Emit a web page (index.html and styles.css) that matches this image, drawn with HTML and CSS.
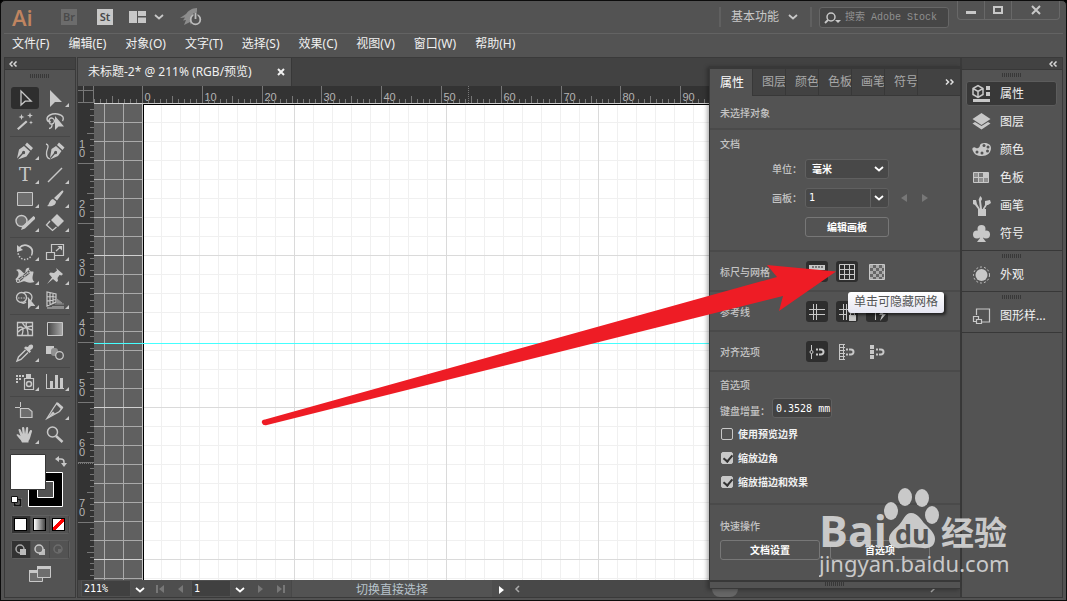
FILE: index.html
```html
<!DOCTYPE html>
<html lang="zh-CN">
  <head>
    <meta charset="utf-8">
    <meta name="viewport" content="width=device-width">
    <title>未标题-2*</title>
    <link rel="stylesheet" href="styles.css">
  </head>
  <body>
    <!-- icons -->
    <svg class="defs" width="0" height="0">
      <symbol id="chevron" viewBox="0 0 10 6"><path d="M1 1l4 3.5L9 1" fill="none" stroke="currentColor" stroke-width="1.8"/></symbol>
      <symbol id="collapse" viewBox="0 0 9 6"><path d="M3.5.5L1 3l2.500 2.500M7.500.5L5 3l2.500 2.500" fill="none" stroke="currentColor" stroke-width="1.500"/></symbol>
      <symbol id="select" viewBox="0 0 20 20"><path d="M6 3v14l4.200-3.800h6z" fill="none" stroke="currentColor" stroke-width="1.300"/></symbol>
      <symbol id="direct" viewBox="0 0 20 20"><path d="M5 2v17l5-5h7z"/></symbol>
      <symbol id="wand" viewBox="0 0 20 20"><path d="M2 16.500l9-8 1.500 1.500-9 8zM6.500 2l.8 2.200 2.200.8-2.200.8L6.500 8l-.8-2.200L3.500 5l2.200-.8zM15 .5l.8 2.200 2.200.8-2.200.8-.8 2.200-.8-2.200L12 3.500l2.200-.8zM16 8.500l.6 1.400 1.400.6-1.400.6-.6 1.400-.6-1.400-1.400-.6 1.400-.6z"/></symbol>
      <symbol id="lasso" viewBox="0 0 20 20"><path d="M5 10C1 9 1 5 5 3c4-2 11-1.500 13 2 .6 1.500.3 3-.5 4M5 10c-2.500-2 .5-5 3-3.500s1.500 5-1 5.500S4 10.500 5.500 9M7 12c.3 3-1 4.500-3 4.500" fill="none" stroke="currentColor" stroke-width="1.400"/><path d="M10 4v14l3.500-3.500H19z"/></symbol>
      <symbol id="pen" viewBox="0 0 20 20"><path d="M12 1.500l6 5.500-2 2.500L10 4zM9 5l6 5.500-3.500 5L3 18.500l5-5.500a1.600 1.600 0 1 0-1-1l-5 5.500L4 8.500z"/></symbol>
      <symbol id="curvature" viewBox="0 0 20 20"><path d="M14 1.500l5.500 5-2 2.500-5.500-5zM11 5l5.500 5-3.500 5L5 18.500l5-5.500a1.600 1.600 0 1 0-1-1l-4 5L6.500 8z"/><path d="M1 3c4 1 1 5 .6 8-.4 3 0 6 3.400 7" fill="none" stroke="currentColor" stroke-width="1.300"/></symbol>
      <symbol id="line" viewBox="0 0 20 20"><path d="M3 17L17 3" stroke="currentColor" stroke-width="1.500"/></symbol>
      <symbol id="rect" viewBox="0 0 20 20"><path d="M2.500 3.500h15v13h-15z" fill="#6e6e6e" stroke="currentColor"/></symbol>
      <symbol id="brush" viewBox="0 0 20 20"><path d="M16.500 2c1.500-1 2.500 0 1.500 1.500l-6 8L9 9zM8 10l3 2.500c0 4-4.500 5.500-9 4.500 2.500-1 2-6 6-7z"/></symbol>
      <symbol id="shaper" viewBox="0 0 20 20"><circle cx="6.500" cy="8" r="5.500" fill="#6e6e6e" stroke="currentColor" stroke-width="1.400"/><path d="M18.500 3L21 5 10 15.500 6 17l1.500-4z"/></symbol>
      <symbol id="eraser" viewBox="0 0 20 20"><path d="M12 1l7 7-6 6-7-7z"/><path d="M5 8L1.500 12l6 5.500 4-3.500" fill="none" stroke="currentColor" stroke-width="1.300"/></symbol>
      <symbol id="rotate" viewBox="0 0 20 20"><path d="M4 6c6-6 15-1 13 6" fill="none" stroke="currentColor" stroke-width="1.700"/><path d="M2 3v7l6-2z"/><path d="M17 12c-2 7-12 8-14-1" fill="none" stroke="currentColor" stroke-width="1.500" stroke-dasharray="1.500 1.500"/></symbol>
      <symbol id="scale" viewBox="0 0 20 20"><path d="M1.500 10.500h8v7h-8zM6.500 10V2.500h12v11H10M11 9l4.500-4" fill="none" stroke="currentColor" stroke-width="1.200"/><path d="M12.500 4H17v4.500z"/></symbol>
      <symbol id="width" viewBox="0 0 20 20"><path d="M1 4c3-2 5 0 6.500 2s3 1 3-1 2-4 4-3c-1 1-1 2 0 3s4 0 4 1-1 4-1 6 1 3 2 4c-3 1-6 1-8 0s-3-1-5 0-4 1-5 0l-1-3c2-2 3-3 3-5S3 5 1 4z"/><path d="M3 15L14 6" stroke="#535353" stroke-width="3"/><path d="M3 15L14 6" stroke="currentColor"/><g fill="#535353" stroke="currentColor"><circle cx="3" cy="15" r="1.500"/><circle cx="8.500" cy="10.500" r="1.500"/><circle cx="13.500" cy="5.500" r="1.500"/></g></symbol>
      <symbol id="pin" viewBox="0 0 20 20"><path d="M11 2l7 6-1.500 1.500-2-.5-2 3 .5 3L11.500 16 8 13l-6 5 5-6.500L4 8l1.500-1.500 3.500.5 3-2.500z"/></symbol>
      <symbol id="builder" viewBox="0 0 20 20"><circle cx="6.500" cy="7.500" r="5" fill="none" stroke="currentColor" stroke-width="1.300"/><path d="M8 3c3-2 9-.5 9 4.500 0 2-1 3-2 4M6 12c2 2 4 1 5 0" fill="none" stroke="currentColor" stroke-width="1.300"/><path d="M3 8h10" stroke="currentColor" stroke-dasharray="1.500 1.200"/><path d="M13 7v12l3-3h4.500z"/></symbol>
      <symbol id="perspective" viewBox="0 0 20 20"><path d="M2 2v14l9-4V4zM5 2.500v12.500M8 3.300v10.200M2 6.500l9 .5M2 11l9-1.500" fill="none" stroke="currentColor" stroke-width="1.200"/><path d="M12 9l5 4h-5zM10 14h9M7 16.500h12" fill="#909090" stroke="#909090"/><path d="M2 18h17" stroke="currentColor"/></symbol>
      <symbol id="mesh" viewBox="0 0 20 20"><path d="M2.500 3.500h15v13h-15zM3 9c5-3 6 1 4 7M7 3c2 5 6 7 10 8M3 13c3-3 8-5 14-6M12 3c-3 4 2 8 1 13" fill="none" stroke="currentColor" stroke-width="1.300"/></symbol>
      <symbol id="gradient" viewBox="0 0 20 20"><path d="M2.500 3.500h15v13h-15z" fill="url(#ramp)" stroke="currentColor"/></symbol>
      <symbol id="eyedropper" viewBox="0 0 20 20"><path d="M13 4c2-4 6-2.500 5 .5-.5 1.500-2 2-3 3l1 1L14.500 10 9 5l1.500-1.500z"/><path d="M10.500 7L3.500 14 2 18l4-1.500 7-7" fill="none" stroke="currentColor" stroke-width="1.400"/></symbol>
      <symbol id="blend" viewBox="0 0 20 20"><path d="M1 3h8v8H1z"/><rect x="6" y="5" width="7" height="8" rx="3" fill="#909090"/><circle cx="14.500" cy="12.500" r="3.800" fill="#535353" stroke="currentColor" stroke-width="1.300"/></symbol>
      <symbol id="spray" viewBox="0 0 20 20"><path d="M9.500 6.500h9v11h-9z" fill="none" stroke="currentColor" stroke-width="1.200"/><path d="M11 2h5v4h-5zM1 3h2v2H1zM4 3h2v2H4zM7 3h2v2H7zM1 6h2v2H1zM4 6h2v2H4zM1 9h2v2H1z"/><circle cx="14" cy="12" r="2.500" fill="none" stroke="currentColor" stroke-width="1.500"/></symbol>
      <symbol id="graph" viewBox="0 0 20 20"><path d="M1 2h1v14h17v1H1zM5 9h3v7H5zM10 3h3v13h-3zM15 6h3v10h-3z"/></symbol>
      <symbol id="artboard" viewBox="0 0 20 20"><path d="M5.500 1v5M0 6.500h5" stroke="currentColor"/><path d="M5.500 7.500h8l3.500 3v6H5.500z" fill="#6e6e6e" stroke="currentColor" stroke-width="1.200"/></symbol>
      <symbol id="slice" viewBox="0 0 20 20"><path d="M12 2l5.500 4.500-3 4L2 17.500 8.500 7z" fill="none" stroke="currentColor" stroke-width="1.300"/><path d="M11 3l2-1.500L18 6l-1.500 2.500zM2 17.500l8-5-2-2z"/></symbol>
      <symbol id="hand" viewBox="0 0 20 20"><path d="M7 17.500c-1-3-4.500-5.500-5.500-7.500 0-1.500 2-1 4 1L3.500 5c0-1.500 1.700-1.500 2.300 0L7.500 9 7 3c0-1.500 2.300-1.500 2.300 0l.7 6 1-6c.4-1.500 2.300-1 2.200.4L12.800 9.500l2.200-4c.9-1 2.400-.2 2 1-1.200 3-1.500 7-3.500 9.500v1.500z"/></symbol>
      <symbol id="zoom" viewBox="0 0 20 20"><circle cx="7.500" cy="7" r="5" fill="none" stroke="currentColor" stroke-width="1.500"/><path d="M11 11l6.500 6" stroke="currentColor" stroke-width="2.500"/></symbol>
      <symbol id="magnet" viewBox="0 0 9 8"><path d="M3 1.500h2a2.500 2.500 0 0 1 0 5H3M0 1.500h2M0 6.500h2" fill="none" stroke="currentColor" stroke-width="2"/></symbol>
      <linearGradient id="ramp"><stop offset="0" stop-color="#444"/><stop offset="1" stop-color="#aaa"/></linearGradient>
    </svg>

    <div class="app">
      <header class="titlebar">
        <span class="logo">Ai</span>
        <button class="app-badge badge-off">Br</button>
        <button class="app-badge">St</button>
        <button class="arrange" aria-label="排列文档">
          <svg width="17" height="12"><path d="M0 0h8v12H0zM9 0h8v5H9zM9 6.500h8V12H9z"/></svg>
          <svg width="10" height="6"><use href="#chevron"/></svg>
        </button>
        <button class="rocket" aria-label="GPU 性能">
          <svg width="22" height="18" viewBox="0 0 22 18"><path d="M17 0C12 0 8 3 6 6L0 10l5-.5-2 3 3-.5-2 5 6-3 1 3c0-6 7-8 6-17z" fill="#8c8c8c"/><circle cx="15.500" cy="11.500" r="4.800" fill="#535353" stroke="#bbb" stroke-width="1.800"/><path d="M15.500 5v6" stroke="#535353" stroke-width="4"/><path d="M15.500 5v6" stroke="#bbb" stroke-width="1.800"/></svg>
        </button>
        <div class="titlebar-right">
          <button class="workspace-menu">基本功能 <svg width="10" height="6"><use href="#chevron"/></svg></button>
          <label class="search">
            <svg width="17" height="12" viewBox="0 0 17 12"><circle cx="7" cy="5" r="4" fill="none" stroke="currentColor" stroke-width="1.500"/><path d="M4 8l-3 3" stroke="currentColor" stroke-width="1.800"/><path d="M11 8h6l-3 3z"/></svg>
            <input type="text" placeholder="搜索 Adobe Stock" aria-label="搜索">
          </label>
          <div class="window-buttons">
            <button aria-label="最小化"><svg width="10" height="10"><path d="M0 6h10v3H0z"/></svg></button>
            <button aria-label="最大化"><svg width="10" height="10"><path d="M1 2h8v6H1z" fill="none" stroke="currentColor" stroke-width="2"/></svg></button>
            <button class="close" aria-label="关闭"><svg width="10" height="10"><path d="M1 1l8 8M9 1L1 9" stroke="currentColor" stroke-width="2"/></svg></button>
          </div>
        </div>
      </header>

      <nav class="menubar">
        <button>文件(F)</button>
        <button>编辑(E)</button>
        <button>对象(O)</button>
        <button>文字(T)</button>
        <button>选择(S)</button>
        <button>效果(C)</button>
        <button>视图(V)</button>
        <button>窗口(W)</button>
        <button>帮助(H)</button>
      </nav>

      <div class="workspace">
        <aside class="toolbox">
          <div class="dock-head"><svg width="9" height="6"><use href="#collapse"/></svg></div>
          <div class="grip"></div>
          <div class="tools">
            <button class="tool active" aria-label="选择"><svg><use href="#select"/></svg></button>
            <button class="tool more" aria-label="直接选择"><svg><use href="#direct"/></svg></button>
            <button class="tool" aria-label="魔棒"><svg><use href="#wand"/></svg></button>
            <button class="tool" aria-label="套索"><svg><use href="#lasso"/></svg></button>
          </div>
          <div class="tools">
            <button class="tool more" aria-label="钢笔"><svg><use href="#pen"/></svg></button>
            <button class="tool" aria-label="曲率"><svg><use href="#curvature"/></svg></button>
            <button class="tool more type-tool" aria-label="文字">T</button>
            <button class="tool more" aria-label="直线段"><svg><use href="#line"/></svg></button>
            <button class="tool more" aria-label="矩形"><svg><use href="#rect"/></svg></button>
            <button class="tool more" aria-label="画笔"><svg><use href="#brush"/></svg></button>
            <button class="tool more" aria-label="Shaper"><svg><use href="#shaper"/></svg></button>
            <button class="tool more" aria-label="橡皮擦"><svg><use href="#eraser"/></svg></button>
          </div>
          <div class="tools">
            <button class="tool more" aria-label="旋转"><svg><use href="#rotate"/></svg></button>
            <button class="tool more" aria-label="比例缩放"><svg><use href="#scale"/></svg></button>
            <button class="tool more" aria-label="宽度"><svg><use href="#width"/></svg></button>
            <button class="tool more" aria-label="操控变形"><svg><use href="#pin"/></svg></button>
            <button class="tool more" aria-label="形状生成器"><svg><use href="#builder"/></svg></button>
            <button class="tool more" aria-label="透视网格"><svg><use href="#perspective"/></svg></button>
          </div>
          <div class="tools">
            <button class="tool" aria-label="网格"><svg><use href="#mesh"/></svg></button>
            <button class="tool" aria-label="渐变"><svg><use href="#gradient"/></svg></button>
            <button class="tool more" aria-label="吸管"><svg><use href="#eyedropper"/></svg></button>
            <button class="tool" aria-label="混合"><svg><use href="#blend"/></svg></button>
          </div>
          <div class="tools">
            <button class="tool more" aria-label="符号喷枪"><svg><use href="#spray"/></svg></button>
            <button class="tool more" aria-label="柱形图"><svg><use href="#graph"/></svg></button>
          </div>
          <div class="tools">
            <button class="tool" aria-label="画板"><svg><use href="#artboard"/></svg></button>
            <button class="tool more" aria-label="切片"><svg><use href="#slice"/></svg></button>
            <button class="tool more" aria-label="抓手"><svg><use href="#hand"/></svg></button>
            <button class="tool" aria-label="缩放"><svg><use href="#zoom"/></svg></button>
          </div>
          <svg class="swatches" width="60" height="56">
            <path d="M18.500 18.500h34v34h-34z" fill="#000" stroke="#fff"/>
            <path d="M27.500 27.500h16v16h-16z" fill="#535353" stroke="#fff"/>
            <path d="M.5.5h35v35H.5z" fill="#fff" stroke="#383838"/>
            <path d="M48 5h3q3 0 3 3v3" fill="none" stroke="#c8c8c8" stroke-width="1.500"/>
            <path d="M45 5l4-3v6zM51 9h6l-3 4z" fill="#c8c8c8"/>
            <path d="M4.500 45.500h6v6h-6z" fill="none" stroke="#999" stroke-width="3"/>
            <path d="M4.500 45.500h6v6h-6z" fill="none" stroke="#111" stroke-width="2"/>
            <path d="M1.500 42.500h6v6h-6z" fill="#fff" stroke="#111"/>
          </svg>
          <div class="switches">
            <button class="on" aria-label="颜色"><span class="chip"></span></button>
            <button aria-label="渐变"><span class="chip chip-ramp"></span></button>
            <button aria-label="无"><span class="chip chip-none"></span></button>
          </div>
          <div class="switches">
            <button class="on" aria-label="正常绘图"><svg width="12" height="12"><circle cx="5" cy="5" r="4" fill="none" stroke="#aaa" stroke-width="1.500"/><path d="M5 5h6v6H5z" fill="#bbb"/></svg></button>
            <button aria-label="背面绘图"><svg width="12" height="12"><path d="M5 5h6v6H5z" fill="#bbb"/><circle cx="5" cy="5" r="4" fill="#666" stroke="#c8c8c8" stroke-width="1.500"/></svg></button>
            <button aria-label="内部绘图"><svg width="12" height="12"><circle cx="5" cy="5" r="4" fill="none" stroke="#6c6c6c" stroke-width="1.500"/><path d="M5 5h3v3H5z" fill="#6c6c6c"/></svg></button>
          </div>
          <button class="screen-mode" aria-label="更改屏幕模式"><svg width="22" height="16"><g fill="#6e6e6e" stroke="#c8c8c8"><path d="M.5 4.500h13v11H.5z"/><path d="M8.500.5h13v11h-13z"/></g><path d="M8 0h14v3H8zM0 4h8v3H0z" fill="#c8c8c8"/></svg></button>
        </aside>

        <main class="document">
          <div class="doc-tabs">
            <div class="doc-tab">未标题-2* @ 211% (RGB/预览)<button aria-label="关闭文档"><svg width="8" height="8"><path d="M1 1l6 6M7 1L1 7" stroke="currentColor" stroke-width="2"/></svg></button></div>
          </div>
          <div class="stage">
            <div class="corner"></div>
            <svg class="ruler" id="ruler-x"></svg>
            <svg class="ruler" id="ruler-y"></svg>
            <div class="canvas">
              <div class="artboard"></div>
              <div class="guide"></div>
            </div>
          </div>
          <footer class="status">
            <input class="zoom-value" type="text" value="211%" aria-label="缩放比例">
            <button class="drop" aria-label="缩放列表"><svg width="10" height="6"><use href="#chevron"/></svg></button>
            <button class="nav" aria-label="首项"><svg width="8" height="8"><path d="M0 0h2v8H0zM8 0v8L3 4z"/></svg></button>
            <button class="nav" aria-label="上一项"><svg width="8" height="8"><path d="M6 0v8L1 4z"/></svg></button>
            <input class="board-value" type="text" value="1" aria-label="画板导航">
            <button class="drop" aria-label="画板列表"><svg width="10" height="6"><use href="#chevron"/></svg></button>
            <button class="nav" aria-label="下一项"><svg width="8" height="8"><path d="M2 0v8l5-4z"/></svg></button>
            <button class="nav" aria-label="末项"><svg width="8" height="8"><path d="M6 0h2v8H6zM0 0v8l5-4z"/></svg></button>
            <span class="hint">切换直接选择</span>
            <button class="drop" aria-label="显示"><svg width="8" height="10"><path d="M2 1v8l5-4z"/></svg></button>
            <div class="scrollbar">
              <svg width="6" height="8"><path d="M5 1L2 4l3 3" fill="none" stroke="#aaa" stroke-width="1.500"/></svg>
              <span class="thumb"></span>
              <svg width="6" height="8"><path d="M1 1l3 3-3 3" fill="none" stroke="#aaa" stroke-width="1.500"/></svg>
            </div>
          </footer>

          <!-- floating properties panel -->
          <section class="panel">
            <div class="panel-tabs">
              <button class="current">属性</button>
              <button>图层</button>
              <button>颜色</button>
              <button>色板</button>
              <button>画笔</button>
              <button>符号</button>
              <button class="expand" aria-label="更多"><svg width="9" height="6" viewBox="0 0 9 6"><path d="M1 .5L3.500 3 1 5.500M5.500.5L8 3 5.500 5.500" fill="none" stroke="currentColor" stroke-width="1.500"/></svg></button>
            </div>
            <div class="group group-none"><h2>未选择对象</h2></div>
            <div class="group group-doc">
              <h2>文档</h2>
              <div class="field">
                <label for="unit">单位：</label>
                <span class="select-box">
                  <select id="unit"><option>毫米</option><option>像素</option></select>
                  <svg width="10" height="6"><use href="#chevron"/></svg>
                </span>
              </div>
              <div class="field">
                <label for="board">画板：</label>
                <span class="combo">
                  <input id="board" type="text" value="1">
                  <button aria-label="选择画板"><svg width="10" height="6"><use href="#chevron"/></svg></button>
                </span>
                <div class="steps">
                  <button aria-label="上一画板"><svg width="6" height="8"><path d="M6 0v8L0 4z"/></svg></button>
                  <button aria-label="下一画板"><svg width="6" height="8"><path d="M0 0v8l6-4z"/></svg></button>
                </div>
              </div>
              <div class="field"><button class="outline edit-board">编辑画板</button></div>
            </div>
            <div class="group row">
              <h2>标尺与网格</h2>
              <button class="toggle on" aria-label="显示标尺"><svg><path d="M0 1h16v5H6v10H0z"/><path d="M4 2v2M7 2v2M10 2v2M13 2v2" stroke="#2b2b2b"/></svg></button>
              <button class="toggle on" aria-label="隐藏网格"><svg><path d="M.5.5h15v15H.5zM5.500 0v16M10.500 0v16M0 5.500h16M0 10.500h16" fill="none" stroke="currentColor"/></svg></button>
              <button class="toggle" aria-label="透明度网格"><svg><path d="M.5.5h15v15H.5z" fill="#666" stroke="currentColor"/><path d="M1 1h3v3H1zM7 1h3v3H7zM13 1h2v3h-2zM4 4h3v3H4zM10 4h3v3h-3zM1 7h3v3H1zM7 7h3v3H7zM13 7h2v3h-2zM4 10h3v3H4zM10 10h3v3h-3zM1 13h3v2H1zM7 13h3v2H7zM13 13h2v2h-2z" fill="#aaa"/></svg></button>
            </div>
            <div class="group row">
              <h2>参考线</h2>
              <button class="toggle on" aria-label="显示参考线"><svg><path d="M4.500 0v16M7.500 0v16M0 5.500h16M0 10.500h16" stroke="currentColor"/></svg></button>
              <button class="toggle on" aria-label="锁定参考线"><svg><path d="M4.500 0v16M7.500 0v16M0 5.500h16M0 10.500h8" stroke="currentColor"/><path d="M10 11h7v6h-7z"/><path d="M11.500 11V9h4v2" fill="none" stroke="currentColor"/></svg></button>
              <button class="toggle on" aria-label="智能参考线"><svg><path d="M6.500 0v16M0 5.500h16" stroke="currentColor"/><path d="M14 5l-4 6h3l-2 6 6-7h-3l2-5z"/></svg></button>
            </div>
            <div class="group row">
              <h2>对齐选项</h2>
              <button class="toggle on" aria-label="对齐点"><svg><path d="M2.500 1v14" stroke="currentColor"/><circle cx="2.500" cy="8" r="1.500" fill="#2b2b2b" stroke="currentColor"/><use href="#magnet" x="7" y="4" width="9" height="8"/></svg></button>
              <button class="toggle" aria-label="对齐网格"><svg><path d="M.5 0v16M4.500 0v16M0 .5h6M0 3.500h6M0 6.500h6M0 9.500h6M0 12.500h6M0 15.500h6" stroke="currentColor"/><use href="#magnet" x="7" y="4" width="9" height="8"/></svg></button>
              <button class="toggle" aria-label="对齐像素"><svg><path d="M1 1h4v4H1zM1 6h4v4H1zM1 11h4v4H1z"/><use href="#magnet" x="7" y="4" width="9" height="8"/></svg></button>
            </div>
            <div class="group group-prefs">
              <h2>首选项</h2>
              <div class="increment">
                <label for="increment">键盘增量：</label>
                <input id="increment" type="text" value="0.3528 mm">
              </div>
              <label class="check"><input type="checkbox">使用预览边界</label>
              <label class="check"><input type="checkbox" checked>缩放边角</label>
              <label class="check"><input type="checkbox" checked>缩放描边和效果</label>
            </div>
            <div class="group group-quick">
              <h2>快速操作</h2>
              <div class="quick">
                <button class="outline">文档设置</button>
                <button class="outline">首选项</button>
              </div>
            </div>
            <div class="panel-foot"><div class="grip"></div></div>
          </section>

          <svg class="arrow" width="576" height="164"><path d="M4 154.500L516 12l-10-12 69 6.500L518 46l4-15L6 160q-4 1-5-2t3-3.500z" fill="#ee1c25"/></svg>
          <div class="tooltip" role="tooltip">单击可隐藏网格</div>
        </main>

        <aside class="dock">
          <div class="dock-head"><svg width="9" height="6"><use href="#collapse"/></svg></div>
          <div class="dock-group">
            <div class="grip"></div>
            <button class="dock-item active"><svg><path d="M1 4.500l5-3 5 3v6l-5 3-5-3zM1 4.500l5 3 5-3M6 7.500v6" fill="none" stroke="currentColor" stroke-width="1.500"/><path d="M14 2h4v4h-4zM14 8h4v4h-4zM1 15h17v3H1z"/></svg>属性</button>
            <button class="dock-item"><svg><path d="M9.500 1l9 6-9 6-9-6zM.5 11.500L3 10l6.500 4 6.500-4 2.500 1.500-9 6z"/></svg>图层</button>
            <button class="dock-item"><svg><path d="M1 11c-2-3 1-5 3-3 2 1 4-1 4-3 1-3 11-3 11 3 0 5-4 8-9 8-5 0-8-2-9-5z"/><g fill="#535353"><circle cx="12" cy="5.500" r="1.500"/><circle cx="16" cy="7" r="1.500"/><circle cx="15.500" cy="11" r="1.500"/><circle cx="5" cy="12" r="1.500"/><circle cx="10" cy="13" r="1.500"/></g></svg>颜色</button>
            <button class="dock-item"><svg><path d="M1.500 4.500h15v10h-15z" fill="#909090"/><path d="M7 5h4v4H7zM2 10h4v4H2z" fill="#777"/><path d="M12 5h4v4h-4z" /><path d="M6.500 4v11M11.500 4v11M1 9.500h16M1.500 4.500h15v10h-15z" fill="none" stroke="currentColor"/></svg>色板</button>
            <button class="dock-item"><svg><path d="M6 13h8v7H6zM8 0c3 2 2 4 1 5l1 8H8L7 5C6 3 8 2 8 0zM1 4h3l1 4 3 5H6L3 9 1 8zM13 5l5-1 1 3-3 2-1 0-3 5h-2l3-5z"/></svg>画笔</button>
            <button class="dock-item"><svg><circle cx="9.500" cy="5" r="4"/><circle cx="5" cy="10.500" r="4"/><circle cx="14" cy="10.500" r="4"/><path d="M8 6h3v8l3 4H5l3-4z"/></svg>符号</button>
          </div>
          <div class="dock-group">
            <div class="grip"></div>
            <button class="dock-item"><svg><circle cx="9.500" cy="10" r="6"/><circle cx="9.500" cy="10" r="8" fill="none" stroke="currentColor" stroke-dasharray="2 2"/></svg>外观</button>
          </div>
          <div class="dock-group">
            <div class="grip"></div>
            <button class="dock-item"><svg><g fill="none" stroke="currentColor" stroke-width="1.200"><path d="M4.500 9V3h13v13H10"/><path d="M1.500 10.500h5v5h-5z"/><path d="M4.500 13.500h5v4h-5z" fill="#535353"/></g></svg>图形样...</button>
          </div>
        </aside>
      </div>

      <svg class="watermark" width="192" height="92">
        <g fill="#d0d0d0">
          <text x="0" y="59" class="wm-bai">Bai</text>
          <ellipse cx="72" cy="23" rx="7" ry="9"/>
          <ellipse cx="86" cy="9" rx="7" ry="9"/>
          <ellipse cx="103" cy="10" rx="7" ry="9"/>
          <ellipse cx="113" cy="27" rx="7" ry="9"/>
          <path d="M92 25c7 0 10 7 14 11s10 9 10 15c0 8-7 10-12 9-8-1-16-1-22 0-7 1-12-3-12-9s6-10 10-14 6-12 12-12z"/>
          <text x="122" y="57" class="wm-cn">经验</text>
          <text x="0" y="84" class="wm-url">jingyan.baidu.com</text>
        </g>
        <text x="76" y="56" class="wm-du">du</text>
      </svg>
    </div>
    <script src="ruler.js"></script>
  </body>
</html>
```

FILE: styles.css
```css
* {
  margin: 0;
  padding: 0;
  box-sizing: border-box;
  outline: none;
}
body {
  background-color: #000;
  color: #e6e6e6;
  font-family: "Noto Sans", "Noto Sans CJK SC", sans-serif;
  font-size: 12px;
  line-height: 16px;
}
button, input, select {
  font: inherit;
  color: inherit;
  background: none;
  border: none;
  min-width: 0;
}
button {
  display: flex;
  align-items: center;
  justify-content: center;
  flex-shrink: 0;
  white-space: nowrap;
}
svg {
  display: block;
  flex-shrink: 0;
  fill: currentColor;
}
.defs {
  position: absolute;
}
.app {
  height: 100vh;
  border: 1px solid #0c0c0c;
  border-radius: 5px 5px 0 0;
  background-color: #535353;
  display: flex;
  flex-direction: column;
  position: relative;
  overflow: hidden;
}

/* title bar */
.titlebar {
  height: 33px;
  flex-shrink: 0;
  margin: 0 3px;
  padding-left: 8px;
  border-bottom: 1px solid #636363;
  display: flex;
  align-items: center;
  color: #c8c8c8;
}
.logo {
  width: 49px;
  color: #c08560;
  font-family: "Open Sans", sans-serif;
  font-size: 22px;
  font-weight: 600;
  line-height: 30px;
}
.app-badge {
  width: 16px;
  height: 16px;
  margin-right: 20px;
  background-color: #c8c8c8;
  color: #484848;
  font-size: 11px;
  font-weight: 600;
}
.app-badge.badge-off {
  background-color: #6c6c6c;
  color: #4a4a4a;
}
.arrange {
  gap: 8px;
  margin: 0 16px 0 -4px;
}
.titlebar-right {
  margin-left: auto;
  display: flex;
  align-self: stretch;
}
.workspace-menu {
  height: 20px;
  margin: 6px 7px 0 0;
  padding: 0 12px 0 10px;
  gap: 9px;
  border: solid #606060;
  border-width: 0 2px;
}
.search {
  width: 130px;
  height: 21px;
  margin: 6px 8px 0 0;
  padding: 0 4px;
  display: flex;
  align-items: center;
  gap: 4px;
  border: 1px solid #666;
  border-radius: 3px;
  background-color: #464646;
}
.search input {
  flex: 1;
  font-family: "Liberation Mono", "Noto Sans CJK SC", monospace;
  font-size: 10px;
}
.search input::placeholder {
  color: #909090;
}
.window-buttons {
  height: 19px;
  margin-right: 3px;
  display: flex;
  border: 1px solid #686868;
  border-top: none;
  border-radius: 0 0 4px 4px;
}
.window-buttons button {
  width: 27px;
  border-right: 1px solid #686868;
}
.window-buttons .close {
  width: 47px;
  border-right: none;
}

.menubar {
  height: 23px;
  flex-shrink: 0;
  padding: 0 11px 3px;
  display: flex;
  gap: 19px;
  color: #f0f0f0;
}

.workspace {
  flex: 1;
  min-height: 0;
  padding: 0 3px 2px;
  display: flex;
}
.dock-head {
  height: 12px;
  flex-shrink: 0;
  padding: 0 4px;
  display: flex;
  align-items: center;
  background-color: #424242;
  border-bottom: 1px solid #383838;
  color: #d8d8d8;
}
.grip {
  width: 20px;
  height: 4px;
  background: repeating-linear-gradient(90deg, #383838 0 1px, transparent 1px 2px);
}

/* tools on the left */
.toolbox {
  width: 72px;
  flex-shrink: 0;
  margin-right: 1px;
  border: 1px solid #3a3a3a;
  display: flex;
  flex-direction: column;
  align-items: center;
}
.toolbox .dock-head {
  align-self: stretch;
}
.toolbox > .grip {
  margin: 4px 0 6px;
}
.tools {
  width: 60px;
  padding: 2px 0;
  border-bottom: 1px solid #474747;
  display: flex;
  flex-wrap: wrap;
}
.tool {
  width: 28px;
  height: 22px;
  margin: 1px;
  border-radius: 3px;
  color: #c8c8c8;
  position: relative;
}
.tool svg {
  width: 20px;
  height: 20px;
  overflow: visible;
}
.tool.active {
  background-color: #2e2e2e;
}
.tool.more::after {
  content: "";
  position: absolute;
  right: 0;
  bottom: 2px;
  border: solid transparent;
  border-width: 0 0 4px 4px;
  border-bottom-color: #c8c8c8;
}
.type-tool {
  font-family: "DejaVu Serif", serif;
  font-size: 18px;
}
.swatches {
  margin: 4px 0 5px;
}
.switches {
  height: 19px;
  margin-bottom: 6px;
  display: flex;
  border: 1px solid #5f5f5f;
  border-radius: 3px;
}
.switches button {
  width: 19px;
  border-right: 1px solid #484848;
}
.switches .on {
  background-color: #323232;
}
.chip {
  width: 13px;
  height: 13px;
  border: 1px solid #000;
  background: #fff;
}
.chip-ramp {
  background: linear-gradient(90deg, #fff, #444);
}
.chip-none {
  background: linear-gradient(135deg, #fff 40%, #f00 40% 60%, #fff 60%);
}
.screen-mode {
  margin-top: 1px;
}

/* document window */
.document {
  flex: 1;
  min-width: 0;
  border: 1px solid #3a3a3a;
  background-color: #424242;
  display: flex;
  flex-direction: column;
  position: relative;
}
.doc-tabs {
  height: 28px;
  flex-shrink: 0;
  display: flex;
}
.doc-tab {
  padding: 0 6px 0 10px;
  display: flex;
  align-items: center;
  gap: 25px;
  background-color: #535353;
  border-right: 1px solid #383838;
  color: #f0f0f0;
}
.stage {
  flex: 1;
  min-height: 0;
  display: grid;
  grid-template: 17px 1fr / 16px 1fr;
  background-color: #333;
}
.corner {
  background:
    linear-gradient(#777, #777) 0 4px / 100% 1px no-repeat,
    linear-gradient(#777, #777) 5px 0 / 1px 100% no-repeat;
  border-right: 1px solid #777;
  border-bottom: 1px solid #777;
}
.ruler {
  width: 100%;
  height: 100%;
  overflow: hidden;
  color: #b4b4b4;
  font-family: "Liberation Sans", sans-serif;
  font-size: 11px;
}
.ruler line {
  stroke: #777;
}
.ruler .cursor {
  stroke-dasharray: 1 1;
}
.canvas {
  position: relative;
  overflow: hidden;
  background-color: #606060;
  background-image:
    linear-gradient(90deg, #c4c4c4 1px, transparent 1px),
    linear-gradient(#d0d0d0 1px, transparent 1px),
    linear-gradient(90deg, #aaa 1px, transparent 1px),
    linear-gradient(#aaa 1px, transparent 1px);
  background-size: 152px 152px, 152px 152px, 19px 19px, 19px 19px;
  background-position: 48px 0, 0 0, 10px 0, 0 0;
}
.artboard {
  position: absolute;
  inset: 1px 0 0 49px;
  border: solid #000;
  border-width: 1px 0 0 1px;
  background-color: #fff;
  background-image:
    linear-gradient(90deg, #dadada 1px, transparent 1px),
    linear-gradient(#dadada 1px, transparent 1px),
    linear-gradient(90deg, #f0f0f0 1px, transparent 1px),
    linear-gradient(#f0f0f0 1px, transparent 1px);
  background-size: 152px 152px, 152px 152px, 19px 19px, 19px 19px;
  background-position: 150px 0, 0 150px, 17px 0, 0 17px;
}
.guide {
  position: absolute;
  inset: 240px 0 auto 0;
  height: 1px;
  background-color: #4ff;
}
.status {
  height: 17px;
  flex-shrink: 0;
  padding-left: 3px;
  display: flex;
  background-color: #484848;
  color: #fff;
}
.status input {
  padding: 1px 0 0 2px;
  background-color: #404040;
  border: 1px solid #505050;
  font-family: "DejaVu Sans Mono", monospace;
  font-size: 10px;
}
.zoom-value {
  width: 50px;
}
.board-value {
  width: 40px;
}
.drop {
  width: 18px;
  padding-top: 2px;
  background-color: #4e4e4e;
}
.nav {
  width: 21px;
  color: #777;
  background-color: #4e4e4e;
}
.hint {
  width: 200px;
  margin-left: 1px;
  background-color: #535353;
  color: #b8c4cc;
  line-height: 19px;
  text-align: center;
}
.scrollbar {
  flex: 1;
  padding: 0 24px 0 4px;
  display: flex;
  align-items: center;
  justify-content: space-between;
}
.thumb {
  width: 26px;
  height: 17px;
  border-radius: 8px;
  background-color: #666;
}

/* properties panel */
.panel {
  position: absolute;
  top: 8px;
  right: -1px;
  width: 252px;
  border: 1px solid #383838;
  border-top-width: 3px;
  background-color: #535353;
  box-shadow: -2px 1px 4px rgba(0, 0, 0, 0.3);
  font-size: 10px;
}
.panel-tabs {
  height: 27px;
  display: flex;
  background-color: #424242;
  color: #a8a8a8;
  font-size: 12px;
}
.panel-tabs button {
  width: 33px;
  padding-left: 9px;
  justify-content: flex-start;
  overflow: hidden;
  border-right: 1px solid #383838;
  border-bottom: 1px solid #383838;
}
.panel-tabs .current {
  width: 43px;
  padding-left: 10px;
  border-bottom: none;
  background-color: #535353;
  color: #fff;
}
.panel-tabs .expand {
  flex: 1;
  justify-content: flex-end;
  padding-right: 6px;
  border-right: none;
  color: #e0e0e0;
}
.group {
  padding: 0 10px;
  border-bottom: 2px solid #4a4a4a;
}
.group h2, .field label, .increment label {
  font-size: 10px;
  font-weight: 500;
  color: #c4c4c4;
}
.group-none {
  padding-top: 9px;
  padding-bottom: 7px;
}
.group-doc {
  padding-top: 6px;
  padding-bottom: 13px;
  display: flex;
  flex-direction: column;
  gap: 9px;
}
.group-doc h2 {
  margin-bottom: -2px;
}
.field {
  height: 20px;
  display: flex;
  align-items: center;
}
.field label {
  width: 85px;
  padding-right: 3px;
  text-align: right;
}
.select-box, .combo, .edit-board {
  width: 84px;
}
.select-box, .combo {
  height: 20px;
  display: flex;
  align-items: center;
  border: 1px solid #606060;
  border-radius: 3px;
  background-color: #484848;
  color: #fff;
}
.select-box {
  padding-right: 4px;
}
.select-box select {
  flex: 1;
  padding-left: 6px;
  appearance: none;
  font-weight: 600;
}
.combo input {
  flex: 1;
  padding-left: 3px;
}
.combo input, .increment input {
  font-family: "DejaVu Sans Mono", monospace;
  font-size: 10px;
}
.combo button {
  width: 18px;
  align-self: stretch;
  padding-right: 1px;
  border-left: 1px solid #606060;
}
.steps {
  margin-left: 12px;
  display: flex;
  gap: 15px;
  color: #777;
}
.outline {
  height: 20px;
  border: 1px solid #777;
  border-radius: 3px;
  color: #fff;
  font-weight: 600;
}
.edit-board {
  margin-left: 85px;
}
.row {
  padding-top: 9px;
  padding-bottom: 8px;
  display: flex;
  align-items: center;
  gap: 8px;
}
.row h2 {
  width: 78px;
}
.toggle {
  width: 22px;
  height: 21px;
  border-radius: 3px;
  color: #c8c8c8;
}
.toggle.on {
  background-color: #2e2e2e;
}
.toggle svg {
  width: 16px;
  height: 16px;
  overflow: visible;
}
.group-prefs {
  padding-top: 5px;
  padding-bottom: 9px;
}
.increment {
  height: 20px;
  margin: 5px 0 4px;
  display: flex;
  align-items: center;
}
.increment label {
  width: 52px;
  padding-top: 6px;
}
.increment input {
  width: 60px;
  height: 20px;
  padding-left: 3px;
  border: 1px solid #606060;
  border-radius: 3px;
  background-color: #424242;
  color: #fff;
}
.check {
  height: 24px;
  display: flex;
  align-items: center;
  gap: 5px;
  color: #f0f0f0;
  font-weight: 600;
}
.check input {
  width: 12px;
  height: 12px;
  margin-left: 1px;
  appearance: none;
  border: 1px solid #c8c8c8;
  border-radius: 2px;
}
.check input:checked {
  background-color: #c8c8c8;
}
.check input:checked::after {
  content: "";
  display: block;
  width: 4px;
  height: 7px;
  margin-left: 3px;
  border: solid #333;
  border-width: 0 2px 2px 0;
  transform: rotate(40deg);
}
.group-quick {
  padding-top: 13px;
  padding-bottom: 20px;
  border-bottom-color: #383838;
}
.quick {
  margin-top: 6px;
  display: flex;
  gap: 10px;
}
.quick .outline {
  width: 100px;
}
.panel-foot {
  height: 6px;
  display: flex;
  justify-content: center;
}

.arrow {
  position: absolute;
  top: 207px;
  right: 123px;
  z-index: 1;
}
.tooltip {
  position: absolute;
  top: 234px;
  right: 16px;
  z-index: 2;
  height: 21px;
  padding: 2px 6px;
  border-radius: 3px;
  background: linear-gradient(#fff, #e6e6f2);
  box-shadow: 2px 2px 3px rgba(0, 0, 0, 0.6);
  color: #555;
}

/* collapsed panels on the right */
.dock {
  width: 102px;
  flex-shrink: 0;
  border: 1px solid #3a3a3a;
}
.dock .dock-head {
  justify-content: flex-end;
}
.dock-group {
  padding: 3px 4px 1px;
  border-bottom: 1px solid #383838;
}
.dock-group .grip {
  margin: 0 auto 4px 36px;
}
.dock-item {
  width: 91px;
  height: 25px;
  margin-bottom: 3px;
  padding-left: 5px;
  justify-content: flex-start;
  gap: 9px;
  border: 1px solid transparent;
  border-radius: 3px;
  color: #f0f0f0;
}
.dock-item.active {
  background-color: #383838;
  border-color: #5c5c5c;
}
.dock-item svg {
  width: 19px;
  height: 20px;
  color: #c8c8c8;
}

.watermark {
  position: absolute;
  right: 55px;
  bottom: 20px;
  z-index: 3;
  opacity: 0.95;
}
.wm-bai {
  font: bold 43px "Open Sans", sans-serif;
}
.wm-du {
  font: bold 27px "Open Sans", sans-serif;
  fill: #535353;
}
.wm-cn {
  font: bold 33px "Noto Sans CJK SC", sans-serif;
}
.wm-url {
  font: 22px "Noto Sans", sans-serif;
}
```

FILE: ruler.js
```js
const step = 5.98; // px per millimetre at 211%

function add(svg, name, attrs, text) {
  const el = document.createElementNS('http://www.w3.org/2000/svg', name);
  for (const key in attrs) {
    el.setAttribute(key, attrs[key]);
  }
  if (text) {
    el.textContent = text;
  }
  svg.appendChild(el);
}

function tickSize(i, full) {
  if (i % 10 == 0) {
    return full;
  }
  return i % 5 == 0 ? 7 : 4;
}

const rulerX = document.getElementById('ruler-x');
const rulerY = document.getElementById('ruler-y');
const width = rulerX.clientWidth;
const height = rulerY.clientHeight;

for (let i = -8; 48 + i * step < width; i++) {
  const x = Math.round(48 + i * step) + 0.5;
  add(rulerX, 'line', { x1: x, x2: x, y1: 17 - tickSize(i, 17), y2: 17 });
  if (i >= 0 && i % 10 == 0) {
    add(rulerX, 'text', { x: x + 2, y: 15 }, String(i));
  }
}
add(rulerX, 'line', { class: 'cursor', x1: 374.5, x2: 374.5, y1: 0, y2: 17 });

for (let i = 1; i * step < height; i++) {
  const y = Math.round(i * step) + 0.5;
  add(rulerY, 'line', { x1: 16 - tickSize(i, 16), x2: 16, y1: y, y2: y });
  if (i % 10 == 0) {
    const digits = String(i);
    add(rulerY, 'text', { x: 1, y: y - 16 }, digits[0]);
    add(rulerY, 'text', { x: 1, y: y - 7 }, digits[1]);
  }
}
add(rulerY, 'line', { class: 'cursor', x1: 0, x2: 16, y1: 360.5, y2: 360.5 });
```
